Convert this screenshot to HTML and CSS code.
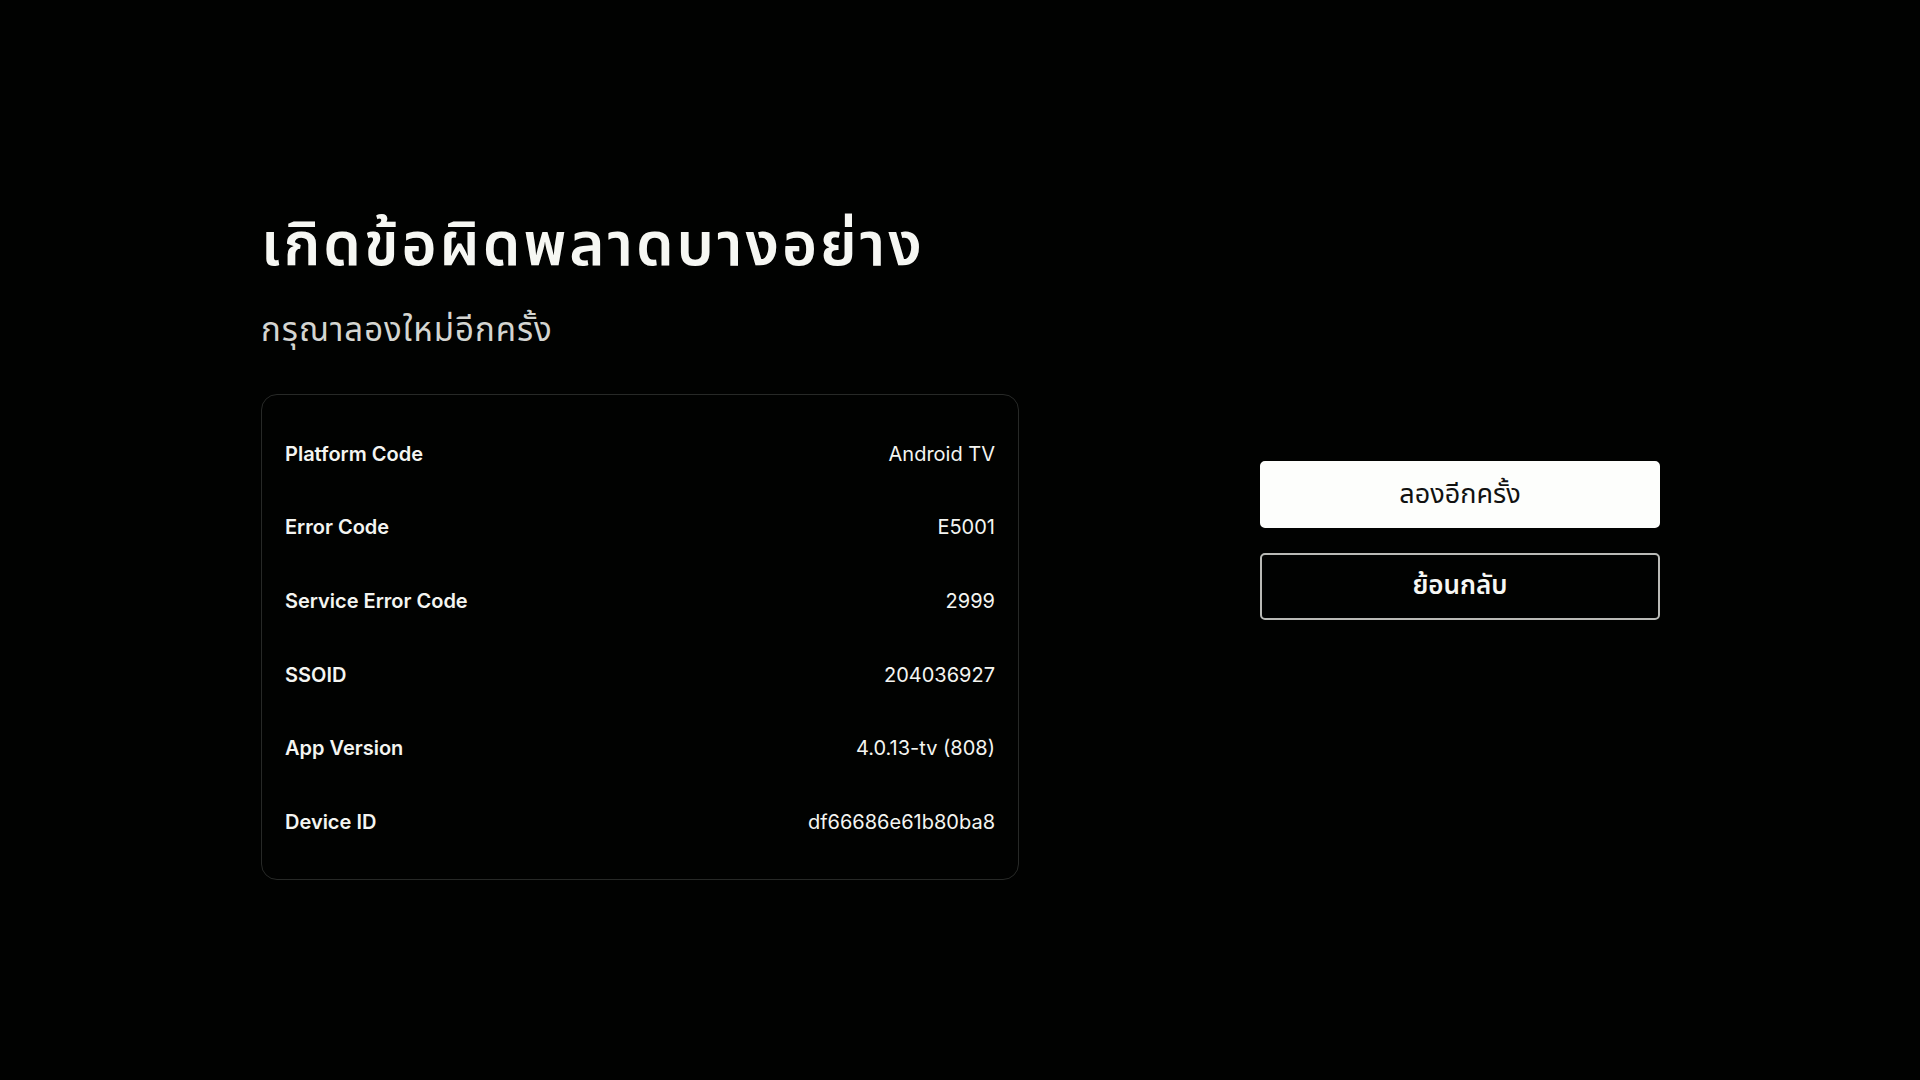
FILE: index.html
```html
<!DOCTYPE html>
<html lang="th">
<head>
<meta charset="utf-8">
<title>เกิดข้อผิดพลาด</title>
<link rel="stylesheet" href="styles.css">
</head>
<body>
<main class="page">
  <section class="info">
    <h1 class="title">เกิดข้อผิดพลาดบางอย่าง</h1>
    <p class="subtitle">กรุณาลองใหม่อีกครั้ง</p>
    <div class="card">
      <div class="row"><span class="label">Platform Code</span><span class="value">Android TV</span></div>
      <div class="row"><span class="label">Error Code</span><span class="value">E5001</span></div>
      <div class="row"><span class="label">Service Error Code</span><span class="value">2999</span></div>
      <div class="row"><span class="label">SSOID</span><span class="value">204036927</span></div>
      <div class="row"><span class="label">App Version</span><span class="value">4.0.13-tv (808)</span></div>
      <div class="row"><span class="label">Device ID</span><span class="value">df66686e61b80ba8</span></div>
    </div>
  </section>
  <section class="actions">
    <button class="btn btn-primary">ลองอีกครั้ง</button>
    <button class="btn btn-outline">ย้อนกลับ</button>
  </section>
</main>
</body>
</html>
```
FILE: styles.css
```css
html, body {
  margin: 0;
  padding: 0;
  background: #010201;
}
body {
  font-family: Inter, "Noto Sans Thai", "Noto Sans", sans-serif;
  color: #f4f5f1;
}
.page {
  box-sizing: border-box;
  width: 1920px;
  height: 1080px;
  padding: 0 260px 0 261px;
  display: flex;
  align-items: center;
  justify-content: space-between;
}
.info {
  width: 758px;
  margin-top: 4px;
  display: flex;
  flex-direction: column;
}
.title {
  margin: 0;
  font-size: 60px;
  font-weight: 600;
  letter-spacing: 3px;
  line-height: 1.3;
  color: #f6f7f3;
}
.subtitle {
  margin: 26px 0 0;
  font-size: 33px;
  font-weight: 400;
  letter-spacing: 1px;
  line-height: 1.3;
  color: #d4d5d1;
}
.card {
  margin-top: 43px;
  box-sizing: border-box;
  height: 486px;
  border: 1px solid #272927;
  border-radius: 16px;
  padding: 22px 23px 20px 23px;
  display: flex;
  flex-direction: column;
}
.row {
  height: 74px;
  display: flex;
  align-items: center;
  justify-content: space-between;
  font-size: 20px;
}
.label {
  font-weight: 600;
}
.value {
  font-weight: 400;
}
.actions {
  width: 400px;
  display: flex;
  flex-direction: column;
  gap: 25px;
}
.btn {
  box-sizing: border-box;
  height: 67px;
  width: 100%;
  border-radius: 5px;
  font-family: Inter, "Noto Sans Thai", "Noto Sans", sans-serif;
  cursor: pointer;
}
.btn-primary {
  background: #fdfefc;
  border: 2px solid #fdfefc;
  color: #111211;
  font-size: 27px;
  font-weight: 400;
}
.btn-outline {
  background: #010201;
  border: 2px solid #b9bab6;
  color: #f6f7f3;
  font-size: 26px;
  font-weight: 600;
}
```
